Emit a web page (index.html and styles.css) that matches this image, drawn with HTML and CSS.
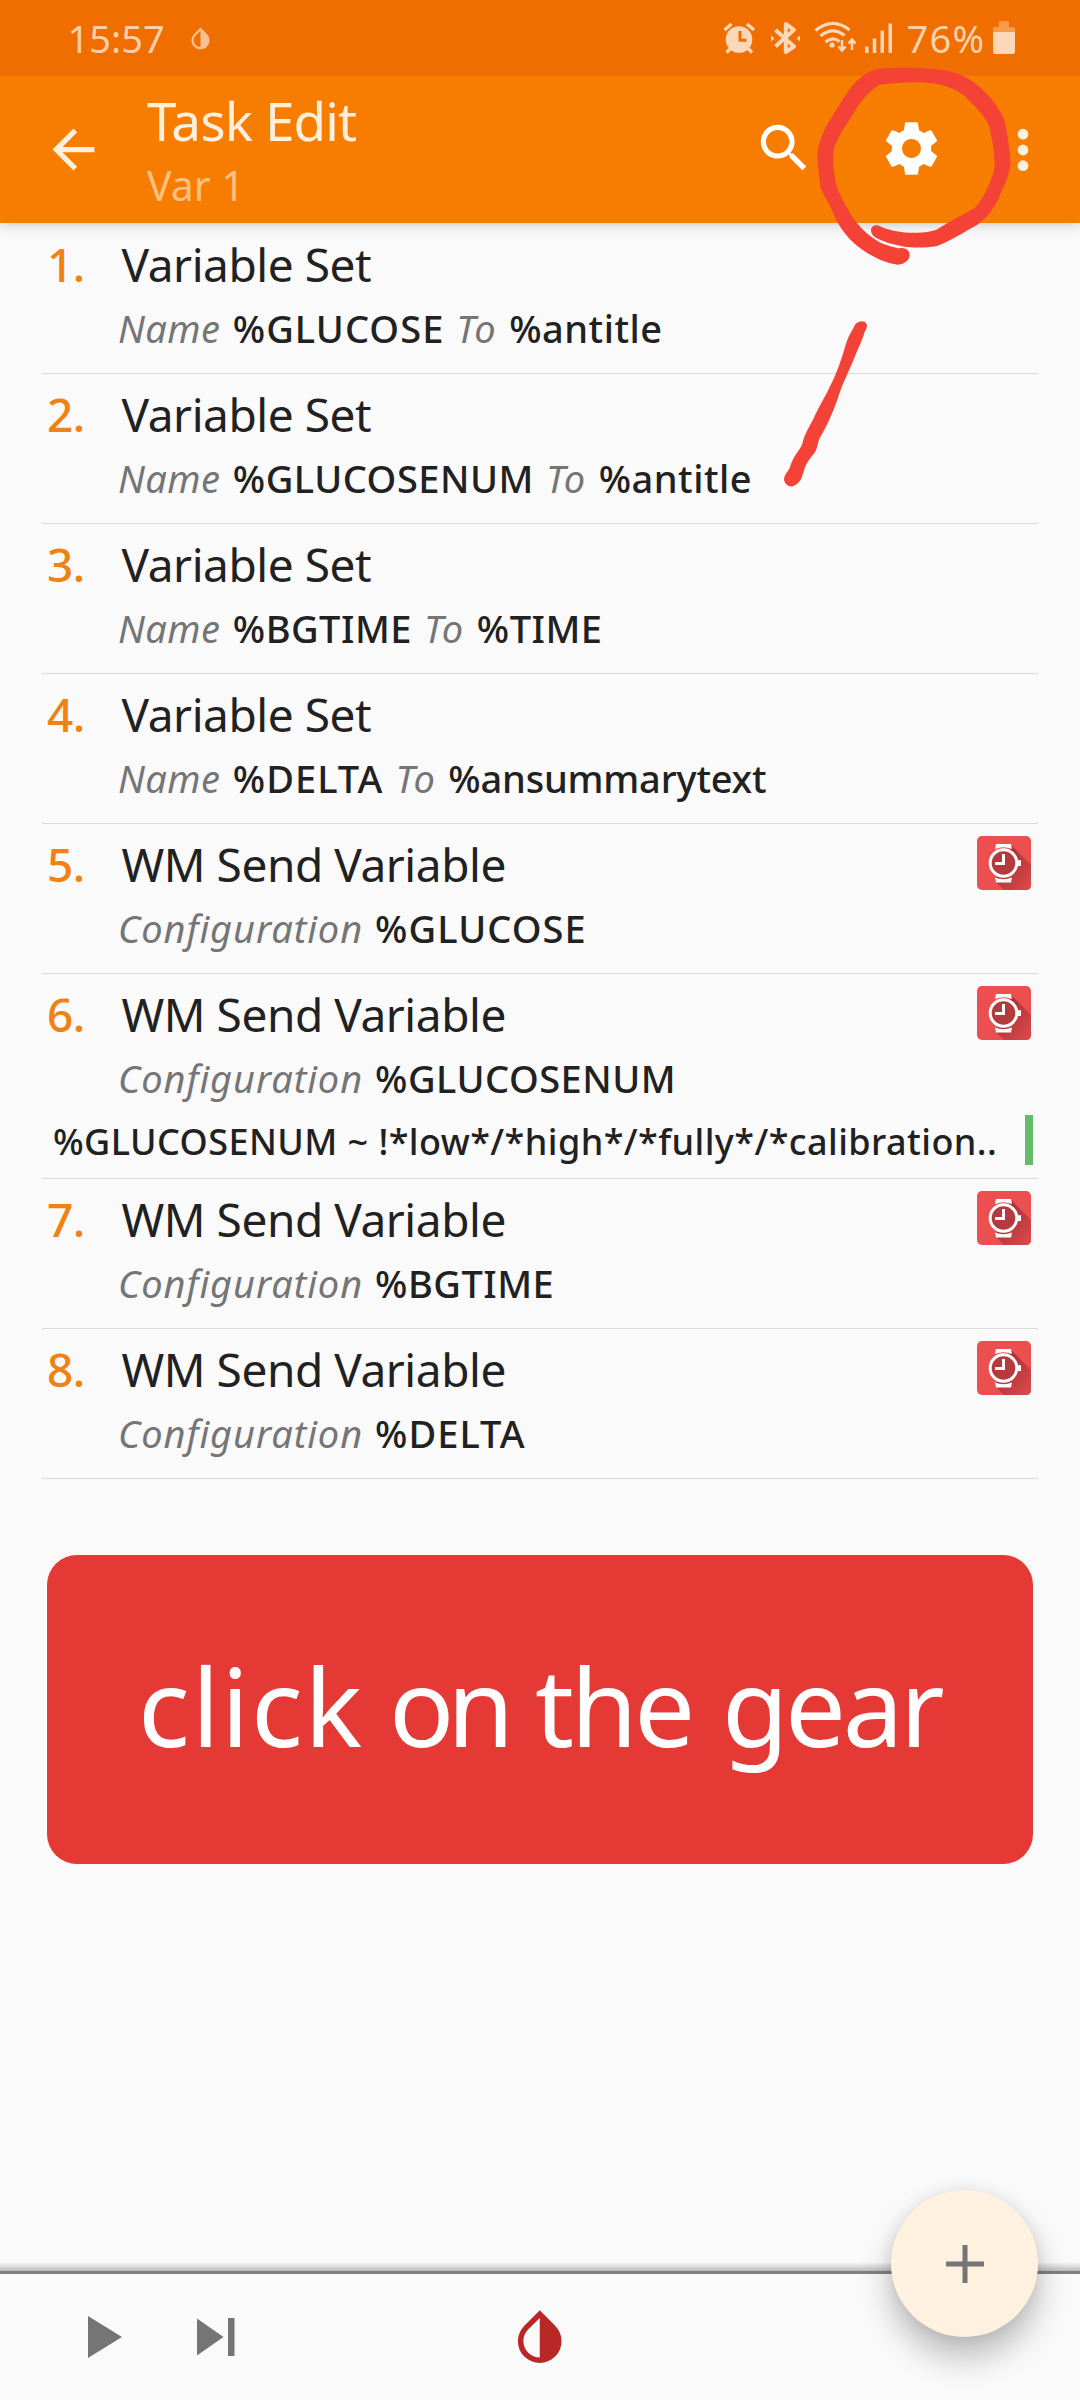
FILE: index.html
```
<!DOCTYPE html>
<html lang="en">
<head>
<meta charset="utf-8">
<title>Task Edit</title>
<link rel="stylesheet" href="styles.css">
</head>
<body>
<svg class="defs" aria-hidden="true">
  <defs>
    <linearGradient id="long-shadow" x1="0" y1="0" x2="1" y2="1">
      <stop offset="0.3" stop-color="#a93338"/>
      <stop offset="1" stop-color="#e04a4b"/>
    </linearGradient>
    <symbol id="drop" viewBox="0 0 24 24">
      <path d="M17.66 7.93L12 2.27 6.34 7.93c-3.12 3.12-3.12 8.19 0 11.31C7.9 20.8 9.95 21.58 12 21.58c2.05 0 4.1-.78 5.66-2.34 3.12-3.12 3.12-8.19 0-11.31zM12 19.59c-1.6 0-3.11-.62-4.24-1.76C6.62 16.69 6 15.19 6 13.59s.62-3.11 1.76-4.24L12 5.1v14.49z"/>
    </symbol>
    <symbol id="watch" viewBox="0 0 54 54">
      <rect width="54" height="54" rx="5" fill="#ec4f50"/>
      <path d="M34 9L54 29V49Q54 54 49 54H27L18 45Z" fill="url(#long-shadow)"/>
      <circle cx="26.5" cy="27" r="13" fill="#b43a3e"/>
      <path d="M18 13L19 8H34L35 13Q26.500 9.500 18 13ZM18 41.500L19 46.500H34L35 41.500Q26.500 45 18 41.500Z" fill="#fff"/>
      <circle cx="26.500" cy="27" r="13.300" fill="none" stroke="#fff" stroke-width="3"/>
      <path d="M39 24.300H44V30H39ZM25 18H28V29H18V26H25Z" fill="#fff"/>
    </symbol>
  </defs>
</svg>

<header>
  <div class="status">
    <span class="clock">15:57</span>
    <svg class="status-drop"><use href="#drop"/></svg>
    <svg class="status-icons" viewBox="0 0 180 36">
      <g fill="none" stroke="#fcd7b8">
        <circle cx="16" cy="19.500" r="13.300" stroke="none" fill="#fcd7b8"/>
        <path d="M1.500 10L8.500 4M31 10L24 4M7.500 28.500L3.500 32.500M25 28.500L29 32.500" stroke-width="3.400"/>
        <path d="M17 11V20.300H23.500" stroke="#f06d00" stroke-width="3"/>
        <path d="M52.500 10L71 26.500L62.800 32V4L71 9.800L52.500 26.500" stroke-width="4" stroke-linejoin="round"/>
        <path d="M48 15.500L51.500 18.500L48 21.500ZM77 15.500L73.500 18.500L77 21.500Z" stroke="none" fill="#fcd7b8"/>
        <path d="M92.500 10.500Q109.500-3.500 126.500 10M97.500 16Q109.500 6 121.500 15.500M102.500 22Q109.500 16 116.500 21.500" stroke-width="3"/>
        <circle cx="109" cy="25" r="2.600" stroke="none" fill="#fcd7b8"/>
        <path d="M119 20V30M115.500 26.500L119 30.500L122.500 26.500M129 30V20M125.500 23.500L129 19.500L132.500 23.500" stroke-width="2.500"/>
        <path d="M143.800 26.500V33M151.500 18.500V33M159.300 10.500V33M167.300 3.500V33" stroke-width="3.500"/>
      </g>
    </svg>
    <span class="percent">76%</span>
    <svg class="battery" viewBox="0 0 22 34">
      <path d="M6 6V1.500Q6 0 7.500 0H14.500Q16 0 16 1.500V6H20Q22 6 22 8V11H0V8Q0 6 2 6Z" fill="#f69a4c"/>
      <path d="M0 11H22V31Q22 33 20 33H2Q0 33 0 31Z" fill="#fcd7b8"/>
    </svg>
  </div>
  <div class="appbar">
    <svg class="back" viewBox="0 0 24 24"><path d="M20 11H7.830l5.590-5.590L12 4l-8 8 8 8 1.410-1.410L7.830 13H20v-2z"/></svg>
    <div class="heading">
      <h1>Task Edit</h1>
      <p>Var 1</p>
    </div>
    <svg class="search" viewBox="0 0 24 24"><path d="M15.500 14h-.79l-.28-.27C15.410 12.590 16 11.110 16 9.500 16 5.910 13.090 3 9.500 3S3 5.910 3 9.500 5.910 16 9.500 16c1.610 0 3.090-.59 4.230-1.570l.27.28v.79l5 4.990L20.490 19l-4.990-5zm-6 0C7.010 14 5 11.990 5 9.500S7.010 5 9.500 5 14 7.010 14 9.500 11.990 14 9.500 14z"/></svg>
    <svg class="gear" viewBox="0 0 24 24"><path d="M19.430 12.980c.04-.32.07-.64.07-.98s-.03-.66-.07-.98l2.110-1.650c.19-.15.24-.42.12-.64l-2-3.460c-.12-.22-.39-.3-.61-.22l-2.490 1c-.52-.4-1.080-.73-1.690-.98l-.38-2.650C14.460 2.180 14.250 2 14 2h-4c-.25 0-.46.18-.49.42l-.38 2.650c-.61.25-1.170.59-1.690.98l-2.490-1c-.23-.09-.49 0-.61.22l-2 3.460c-.13.22-.07.49.12.64l2.110 1.650c-.04.32-.07.65-.07.98s.03.66.07.98l-2.110 1.650c-.19.15-.24.42-.12.64l2 3.460c.12.22.39.3.61.22l2.490-1c.52.4 1.080.73 1.690.98l.38 2.650c.03.24.24.42.49.42h4c.25 0 .46-.18.49-.42l.38-2.650c.61-.25 1.170-.59 1.690-.98l2.490 1c.23.09.49 0 .61-.22l2-3.460c.12-.22.07-.49-.12-.64l-2.110-1.650zM12 15.600c-1.990 0-3.600-1.610-3.600-3.600s1.610-3.600 3.600-3.600 3.600 1.610 3.600 3.600-1.610 3.600-3.600 3.600z"/></svg>
    <svg class="more" viewBox="0 0 12 44"><circle cx="6" cy="6.200" r="5.400"/><circle cx="6" cy="22" r="5.400"/><circle cx="6" cy="37.700" r="5.400"/></svg>
  </div>
</header>

<main>
  <ol class="actions">
    <li>
      <div class="title"><span class="num">1.</span>Variable Set</div>
      <div class="params"><i>Name</i><b class="wide">%GLUCOSE</b><i class="to">To</i><b>%antitle</b></div>
    </li>
    <li>
      <div class="title"><span class="num">2.</span>Variable Set</div>
      <div class="params"><i>Name</i><b>%GLUCOSENUM</b><i class="to">To</i><b>%antitle</b></div>
    </li>
    <li>
      <div class="title"><span class="num">3.</span>Variable Set</div>
      <div class="params"><i>Name</i><b>%BGTIME</b><i class="to">To</i><b>%TIME</b></div>
    </li>
    <li>
      <div class="title"><span class="num">4.</span>Variable Set</div>
      <div class="params"><i>Name</i><b class="wide">%DELTA</b><i class="to">To</i><b class="tight">%ansummarytext</b></div>
    </li>
    <li>
      <div class="title"><span class="num">5.</span>WM Send Variable<svg class="plugin"><use href="#watch"/></svg></div>
      <div class="params"><i class="config">Configuration</i><b class="wide">%GLUCOSE</b></div>
    </li>
    <li>
      <div class="title"><span class="num">6.</span>WM Send Variable<svg class="plugin"><use href="#watch"/></svg></div>
      <div class="params"><i class="config">Configuration</i><b>%GLUCOSENUM</b></div>
      <div class="condition">%GLUCOSENUM ~ !*low*/*high*/*fully*/*calibration..</div>
    </li>
    <li>
      <div class="title"><span class="num">7.</span>WM Send Variable<svg class="plugin"><use href="#watch"/></svg></div>
      <div class="params"><i class="config">Configuration</i><b>%BGTIME</b></div>
    </li>
    <li>
      <div class="title"><span class="num">8.</span>WM Send Variable<svg class="plugin"><use href="#watch"/></svg></div>
      <div class="params"><i class="config">Configuration</i><b class="wide">%DELTA</b></div>
    </li>
  </ol>
  <div class="callout"><span class="loose">click</span> <span class="close">on</span> <span>the</span> <span>gear</span></div>
</main>

<footer>
  <svg class="play" viewBox="0 0 34 49" preserveAspectRatio="none"><path d="M0 0L34 24.500L0 49Z"/></svg>
  <svg class="step" viewBox="0 0 38 38"><path d="M0 .5L26.500 19L0 37.500ZM31 0H37.500V38H31Z"/></svg>
  <svg class="run-drop"><use href="#drop"/></svg>
  <div class="fab"><svg viewBox="0 0 38 38"><path d="M16.500 0H21.500V16.500H38V21.500H21.500V38H16.500V21.500H0V16.500H16.500Z"/></svg></div>
</footer>

<svg class="ink ink-circle" viewBox="400 190 610 620">
  <path d="M655 795C600 788 550 755 520 728C490 700 470 665 458 635C445 600 427 585 422 560C420 530 412 500 413 470C414 430 435 385 455 355C480 315 505 270 530 245C555 222 575 210 600 207C660 202 740 203 790 212C850 220 890 250 910 272C940 300 965 335 975 365C985 410 990 450 993 490C990 530 970 565 955 600C935 640 910 665 885 680C850 700 810 725 770 740C740 745 710 744 690 743C650 738 615 728 590 715C570 705 568 680 587 677C600 676 605 684 625 689C650 697 680 700 700 699C730 700 750 697 770 690C810 665 850 645 885 625C910 600 930 555 943 515C948 480 940 430 930 385C920 350 885 320 855 288C830 270 790 253 750 250C700 245 650 250 598 255C570 275 545 300 525 335C505 370 480 400 465 440C455 470 462 510 468 550C475 580 500 620 520 655C545 690 580 720 610 732C640 742 655 747 665 745C700 745 700 790 655 795Z"/>
</svg>
<svg class="ink ink-line" viewBox="120 110 270 520">
  <path d="M345 133C355 120 378 118 381 135C380 150 374 150 371 165C362 190 350 215 345 228C330 265 310 305 298 340C285 380 265 430 238 475C230 500 232 510 215 528C190 560 195 570 183 597C165 625 140 625 132 600C132 580 145 575 150 560C160 525 180 510 187 490C195 455 215 430 225 405C245 365 258 345 270 318C290 280 305 235 318 190C328 160 340 145 345 133Z"/>
</svg>
</body>
</html>
```
FILE: styles.css
```
* { box-sizing: border-box; margin: 0; padding: 0; }

body {
  position: relative;
  display: flex;
  flex-direction: column;
  width: 1080px;
  height: 2400px;
  overflow: hidden;
  background: #fafafa;
  color: #212121;
  font-family: "Noto Sans", sans-serif;
}

svg { display: block; flex: none; }
.defs { position: absolute; width: 0; height: 0; }

header { position: relative; z-index: 1; box-shadow: 0 2px 12px rgba(0, 0, 0, .2); }

.status {
  display: flex;
  align-items: flex-start;
  height: 76px;
  padding-left: 67.500px;
  background: #f06d00;
  color: #fcd0a8;
  font-size: 38px;
  line-height: 50px;
}
.clock { width: 119px; margin-top: 13px; }
.status-drop { width: 27px; height: 27px; margin-top: 24.500px; fill: #fac094; }
.status-icons { width: 180px; height: 36px; margin: 20px 0 0 509px; }
.percent { width: 90px; margin: 13px 0 0 4px; letter-spacing: 1.300px; }
.battery { width: 22px; height: 34px; margin: 21px 0 0 -3.500px; }

.appbar {
  display: flex;
  align-items: flex-start;
  height: 147px;
  padding-left: 42px;
  background: #f77d00;
  color: #ffefdc;
  fill: #fff;
}
.back { width: 63px; height: 63px; margin-top: 42px; fill: #ffefdc; }
.heading { width: 606px; margin-left: 42px; }
h1 { margin-top: 10px; font-size: 53px; font-weight: 400; line-height: 70px; letter-spacing: -.9px; }
p { margin-top: 4px; color: #fcc080; font-size: 41px; line-height: 50px; }
.search { width: 62.400px; height: 62.400px; margin-top: 41px; }
.gear { width: 63px; height: 63px; margin: 41px 0 0 65px; }
.more { width: 12px; height: 44px; margin: 51.500px 0 0 74px; fill: #ffefdc; }

main { flex: 1; padding-top: 1px; }
.actions { margin: 0 42px; list-style: none; }
li { min-height: 150px; padding-top: 10px; border-bottom: 1px solid #dadada; }
li:has(.condition) { height: 205px; }
.title { display: flex; height: 60px; font-size: 46px; line-height: 60px; letter-spacing: -.45px; }
.num { width: 79.500px; padding-left: 5px; color: #ef8213; font-weight: 500; }
.plugin { width: 54px; height: 54px; margin: 2px 7px 0 auto; }
.params { display: flex; margin-top: 9px; padding-left: 76px; font-size: 38px; line-height: 50px; }
i { margin-right: 12.500px; color: #757575; letter-spacing: .4px; }
.to { margin: 0 12px 0 12px; letter-spacing: 1.500px; }
.config { margin-right: 12px; letter-spacing: .9px; }
b { font-weight: 500; letter-spacing: .5px; }
.wide { letter-spacing: 1.050px; }
.tight { letter-spacing: -.200px; }
.condition {
  height: 50px;
  margin: 12px 5px 0 0;
  padding: 1.500px 0 0 11px;
  border-right: 8px solid #66bb6a;
  font-size: 36px;
  font-weight: 500;
  line-height: 50px;
  letter-spacing: .43px;
  white-space: nowrap;
}

.callout {
  display: grid;
  grid-template-columns: 251px 146px 187px 1fr;
  height: 309px;
  margin: 76px 47px 0;
  padding-left: 91px;
  border-radius: 30px;
  background: #e53935;
  color: #fff;
  font-size: 108px;
  line-height: 301px;
  letter-spacing: -3.300px;
}
.loose { letter-spacing: 1.800px; }
.close { letter-spacing: -7px; }

footer {
  position: relative;
  display: flex;
  align-items: flex-start;
  height: 129px;
  padding-left: 88px;
  border-top: 3px solid #808080;
  fill: #757575;
}
footer::before {
  content: "";
  position: absolute;
  left: 0;
  top: -12px;
  width: 100%;
  height: 9px;
  background: linear-gradient(#fafafa, #bcbcbc);
}
.play { width: 34px; height: 42px; margin-top: 42px; }
.step { width: 38px; height: 38px; margin: 44px 0 0 75px; }
.run-drop { width: 65.500px; height: 65.500px; margin: 30px 0 0 272px; fill: #b92727; }
.fab {
  position: absolute;
  left: 891px;
  top: -84px;
  display: grid;
  place-items: center;
  width: 147px;
  height: 147px;
  border-radius: 50%;
  background: #fff1df;
  box-shadow: 0 20px 34px rgba(0, 0, 0, .26), 0 0 16px rgba(0, 0, 0, .08);
}
.fab svg { width: 38px; height: 38px; }

.ink { position: absolute; z-index: 2; fill: #f44336; }
.ink-circle { left: 813.300px; top: 63.300px; width: 203.300px; height: 206.700px; }
.ink-line { left: 780px; top: 316.700px; width: 90px; height: 173.300px; }
```
